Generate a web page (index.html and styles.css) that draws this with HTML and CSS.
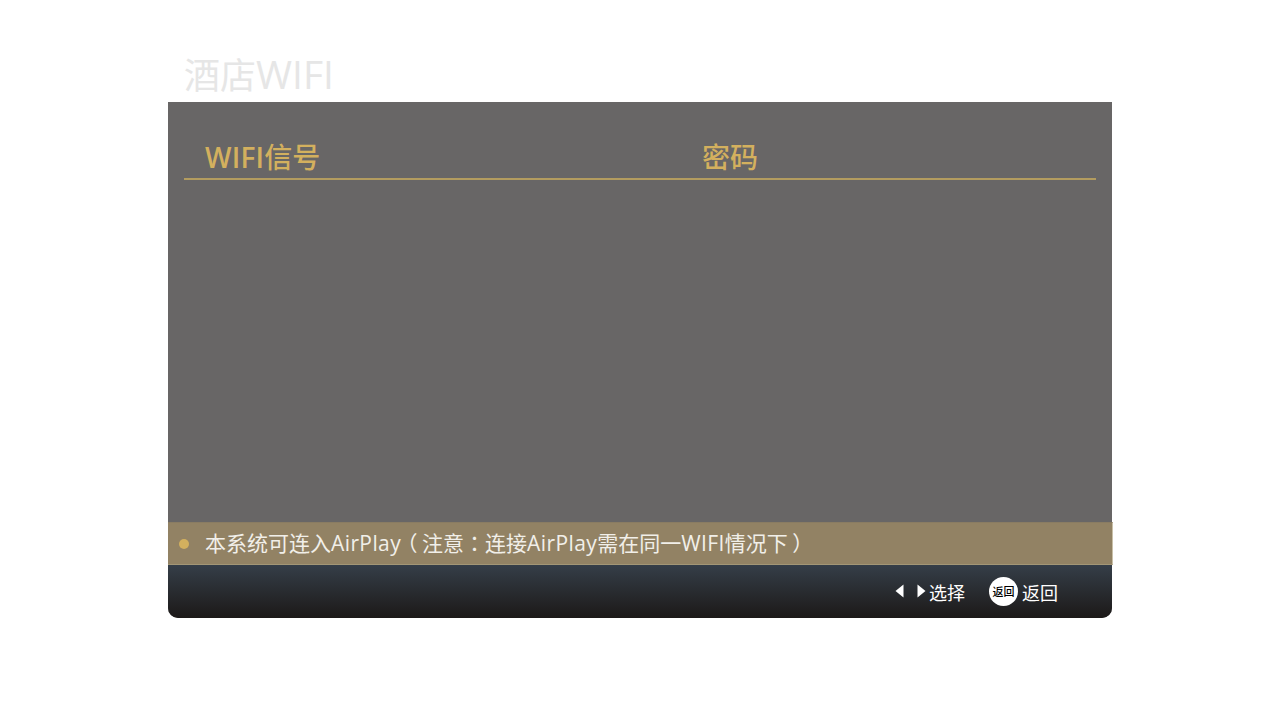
FILE: index.html
```html
<!DOCTYPE html>
<html lang="zh-CN">
<head>
<meta charset="utf-8">
<title>酒店WIFI</title>
<link rel="stylesheet" href="styles.css">
</head>
<body>
<main class="page">
  <h1 class="title">酒店<span class="title-lat">WIFI</span></h1>
  <section class="panel">
    <div class="table">
      <div class="table-head">
        <div class="col col-ssid"><span class="head-lat">WIFI</span>信号</div>
        <div class="col col-pass">密码</div>
      </div>
    </div>
    <div class="notice">
      <span class="dot"></span>
      <span class="notice-text">本系统可连入<span class="lat">AirPlay</span><span class="punct paren" lang="zh-TW">（</span>注意<span class="punct" lang="zh-TW">：</span>连接<span class="lat">AirPlay</span>需在同一<span class="lat">WIFI</span>情况下<span class="punct paren" lang="zh-TW">）</span></span>
    </div>
    <footer class="footer">
      <div class="hint">
        <svg class="arrow" width="9" height="14" viewBox="0 0 9 14"><path d="M8.5 0.5V13.5L0.5 7Z" fill="#fff"/></svg>
        <svg class="arrow arrow-right" width="9" height="14" viewBox="0 0 9 14"><path d="M0.5 0.5V13.5L8.5 7Z" fill="#fff"/></svg>
        <span>选择</span>
      </div>
      <div class="hint hint-back">
        <span class="back-badge">返回</span>
        <span>返回</span>
      </div>
    </footer>
  </section>
</main>
</body>
</html>
```
FILE: styles.css
```css
* { box-sizing: border-box; }
html, body { margin: 0; padding: 0; background: #fff; }
body {
  width: 1280px;
  height: 720px;
  overflow: hidden;
  font-family: "Open Sans", "Noto Sans CJK SC", sans-serif;
}
.page { width: 944px; margin: 0 auto; padding-top: 49px; }
.title {
  margin: 0;
  height: 53px;
  padding-left: 16px;
  font-size: 36px;
  line-height: 50px;
  font-weight: 400;
  color: #e6e6e6;
  white-space: nowrap;
}
.title-lat { font-size: 39px; }
.panel {
  height: 516px;
  display: flex;
  flex-direction: column;
  background: #686666;
  border-radius: 0 0 10px 10px;
}
.table { flex: 1; padding: 32px 16px 0; }
.table-head {
  display: flex;
  height: 46px;
  border-bottom: 2px solid #b39c5f;
  font-size: 28px;
  line-height: 46px;
  font-weight: 500;
  color: #d3b05e;
}
.head-lat { font-weight: 600; letter-spacing: 0.2px; }
.col-ssid { width: 518px; padding-left: 21px; }
.notice {
  height: 43px;
  display: flex;
  align-items: center;
  margin-right: -1px;
  padding: 0 0 3px 11px;
  background: #928264;
  border-top: 1px solid #8a7c62;
  border-bottom: 1px solid #a39676;
  border-right: 1px solid #c9c0a8;
  color: #f1efe9;
  font-size: 21px;
}
.lat { letter-spacing: 0.4px; }
.punct { font-family: "Noto Sans CJK TC", sans-serif; }
.paren {
  display: inline-block;
  width: 21px;
  text-align: center;
  font-feature-settings: "palt";
}
.dot {
  width: 10px;
  height: 10px;
  border-radius: 50%;
  background: #d3b05e;
  margin: 3px 16px 0 0;
}
.footer {
  height: 53px;
  display: flex;
  justify-content: flex-end;
  align-items: center;
  padding-right: 54px;
  background: linear-gradient(#353e48, #1c1918);
  border-radius: 0 0 10px 10px;
  color: #fff;
  font-size: 18px;
}
.hint { display: flex; align-items: center; }
.arrow { margin-top: -2px; }
.arrow-right { margin: -2px 3px 0 13px; }
.hint-back { margin-left: 24px; }
.back-badge {
  width: 29px;
  height: 29px;
  border-radius: 50%;
  background: #fff;
  color: #000;
  font-size: 11px;
  font-weight: 500;
  line-height: 29px;
  text-align: center;
  margin-right: 4px;
}
```
